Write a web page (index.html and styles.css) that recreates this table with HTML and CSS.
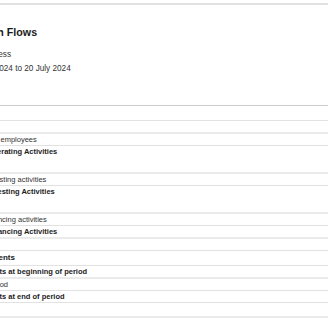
FILE: index.html
```html
<!DOCTYPE html>
<html lang="en">
<head>
<meta charset="utf-8">
<title>Statement of Cash Flows</title>
<link rel="stylesheet" href="styles.css">
</head>
<body>
<div class="topbar"></div>
<main class="report">
  <header class="report-header">
    <h1 class="report-title">Statement of Cash Flows</h1>
    <p class="report-org">Brightwater Home Business</p>
    <p class="report-period">For the period 21 June 2024 to 20 July 2024</p>
  </header>
  <div class="report-table">
    <div class="row row-head"></div>

    <div class="row row-section">Operating Activities</div>
    <div class="row row-item">Payments to suppliers and employees</div>
    <div class="row row-total">Net Cash Flows from Operating Activities</div>

    <div class="row row-section spaced">Investing Activities</div>
    <div class="row row-item">Other cash items from investing activities</div>
    <div class="row row-total">Net Cash Flows from Investing Activities</div>

    <div class="row row-section spaced">Financing Activities</div>
    <div class="row row-item">Other cash items from financing activities</div>
    <div class="row row-total">Net Cash Flows from Financing Activities</div>

    <div class="row row-blank"></div>

    <div class="row row-group">Cash and Cash Equivalents</div>
    <div class="row row-total">Cash and cash equivalents at beginning of period</div>
    <div class="row row-item">Net change in cash for period</div>
    <div class="row row-total">Cash and cash equivalents at end of period</div>
    <div class="row row-end"></div>
  </div>
</main>
</body>
</html>
```
FILE: styles.css
```css
html, body {
  margin: 0;
  padding: 0;
  background: #fff;
}

body {
  width: 328px;
  height: 320px;
  overflow: hidden;
  font-family: "Liberation Sans", Arial, sans-serif;
  color: #222;
}

/* thin rule along the top of the report frame */
.topbar {
  margin-top: 3px;
  height: 2px;
  background: #e2e2e2;
  box-shadow: 0 3px 8px rgba(0, 0, 0, 0.025);
}

/* the report is scrolled sideways, so its left part sits out of view */
.report {
  margin-left: -90px;
}

.report-header {
  padding-top: 21px;
}

.report-title {
  margin: 0;
  font-size: 10.7px;
  line-height: 13px;
  font-weight: 700;
  color: #1b1b1b;
}

.report-org,
.report-period {
  margin: 0;
  font-size: 8.2px;
  line-height: 14px;
  color: #333;
}

.report-org {
  margin-top: 9px;
}

.report-table {
  margin-top: 29px;
}

.row {
  height: 11px;
  font-size: 7.5px;
  line-height: 11px;
  white-space: nowrap;
  color: #333;
}

.row-head {
  height: 14px;
  border-top: 1px solid #cdcdcd;
}

.row-section {
  border-top: 1px solid #e2e2e2;
  font-weight: 700;
  color: #222;
}

.row-section.spaced {
  border-top: 0;
  padding-top: 4px;
}

.row-item {
  border-top: 2px solid #ebebeb;
}

.row-total {
  border-top: 1px solid #e2e2e2;
  font-weight: 700;
  color: #222;
}

.row-blank {
  border-top: 2px solid #ebebeb;
}

.row-group {
  height: 14px;
  line-height: 14px;
  font-size: 8px;
  font-weight: 700;
  color: #222;
  border-top: 1px solid #e2e2e2;
}

.row-end {
  height: 13px;
  border-top: 1px solid #e2e2e2;
  border-bottom: 2px solid #ebebeb;
}
```
